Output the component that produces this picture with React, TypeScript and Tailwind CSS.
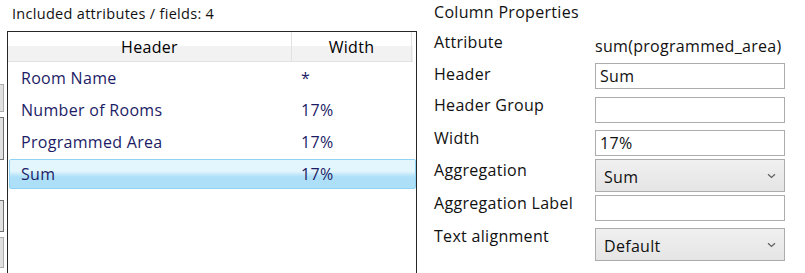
import React from "react";

const rows = [
  { name: "Room Name", width: "*" },
  { name: "Number of Rooms", width: "17%" },
  { name: "Programmed Area", width: "17%" },
  { name: "Sum", width: "17%", selected: true },
];

function Chevron() {
  return (
    <svg width="9" height="6" viewBox="0 0 9 6" className="text-[#606060]">
      <path d="M1 1.2 L4.5 4.5 L8 1.2" fill="none" stroke="currentColor" strokeWidth="1.2" />
    </svg>
  );
}

function TextBox({ value, className = "" }: { value?: string; className?: string }) {
  return (
    <div className={`w-[190px] h-[26px] border border-[#acacac] bg-white pl-[4px] leading-[24px] ${className}`}>{value}</div>
  );
}

function Select({ value, className = "" }: { value: string; className?: string }) {
  return (
    <div
      className={`w-[190px] h-[33px] border border-[#acacac] bg-gradient-to-b from-[#f0f0f0] to-[#e5e5e5] pl-[8px] pr-[8px] flex items-center justify-between ${className}`}
    >
      <span className="pt-[2px]">{value}</span>
      <Chevron />
    </div>
  );
}

export default function App() {
  return (
    <div className="w-[805px] h-[273px] bg-white overflow-hidden flex font-['Open_Sans',sans-serif] text-[16px] tracking-[0.3px] text-[#111]">
      {/* cut-off buttons at the window edge */}
      <div className="w-[4px] flex flex-col">
        <div className="h-[84px]" />
        <div className="h-[28px] border border-l-0 border-[#adadad] bg-[#e1e1e1]" />
        <div className="h-[5px]" />
        <div className="h-[43px] border border-l-0 border-[#707070] bg-[#e1e1e1]" />
        <div className="h-[40px]" />
        <div className="h-[32px] border border-l-0 border-[#707070] bg-[#e1e1e1]" />
        <div className="h-[5px]" />
        <div className="h-[31px] border border-l-0 border-[#adadad] bg-[#e1e1e1]" />
      </div>

      {/* attributes list */}
      <div className="ml-[3px] w-[410px] flex flex-col">
        <div className="h-[31px] pl-[5px] pt-[4px] leading-[20px] text-[14.5px]">Included attributes / fields: 4</div>
        <div className="flex-1 border-l border-t border-r border-[#262626] flex flex-col">
          <div className="flex h-[30px] mr-[3px] bg-gradient-to-b from-white from-50% to-[#f2f2f2] to-50% border-b border-[#e2e2e2] text-black">
            <div className="w-[284px] border-r border-[#e2e2e2] flex items-center justify-center">Header</div>
            <div className="w-[120px] border-r border-[#e2e2e2] flex items-center justify-center">Width</div>
          </div>
          <div className="flex flex-col gap-[2px] pt-[1px] pl-[1px]">
            {rows.map((r) =>
              <div
                key={r.name}
                className={`h-[30px] flex items-center rounded-[2px] border ${
                  r.selected
                    ? "border-[#8fd3f5] bg-gradient-to-b from-[#e3f5fd] from-40% to-[#ade0f8] to-60%"
                    : "border-transparent"
                } text-[#1c1c66]`}
              >
                <div className="w-[291px] pl-[11px]">{r.name}</div>
                <div>{r.width}</div>
              </div>
            )}
          </div>
        </div>
      </div>

      {/* column properties */}
      <div className="ml-[17px] flex flex-col leading-[20px]">
        <div className="h-[32px] pt-[2px]">Column Properties</div>
        <div className="h-[31px] flex">
          <div className="w-[161px]">Attribute</div>
          <div className="pt-[4px]">sum(programmed_area)</div>
        </div>
        <div className="h-[32px] flex">
          <div className="w-[161px] pt-[1px]">Header</div>
          <TextBox value="Sum" />
        </div>
        <div className="h-[33px] flex">
          <div className="w-[161px]">Header Group</div>
          <TextBox className="mt-[2px]" />
        </div>
        <div className="h-[32px] flex">
          <div className="w-[161px]">Width</div>
          <TextBox value="17%" className="mt-[2px]" />
        </div>
        <div className="h-[33px] flex">
          <div className="w-[161px]">Aggregation</div>
          <Select value="Sum" className="-mt-[1px]" />
        </div>
        <div className="h-[33px] flex">
          <div className="w-[161px]">Aggregation Label</div>
          <TextBox className="mt-[2px]" />
        </div>
        <div className="h-[33px] flex">
          <div className="w-[161px]">Text alignment</div>
          <Select value="Default" className="mt-[2px]" />
        </div>
      </div>
    </div>
  );
}
